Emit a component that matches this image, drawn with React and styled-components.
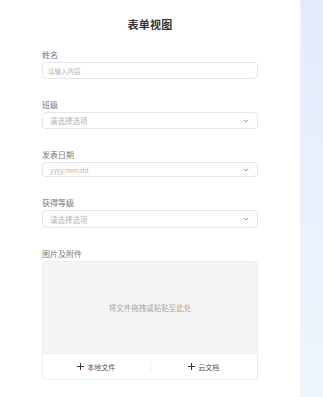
import React from 'react'
import styled, { createGlobalStyle } from 'styled-components'

const Global = createGlobalStyle`
  html, body { margin: 0; padding: 0; }
  body { font-family: "Noto Sans CJK SC", "Noto Sans", sans-serif; }
`

const Page = styled.div`
  display: flex;
  width: 323px;
  height: 397px;
  overflow: hidden;
`

const Panel = styled.div`
  width: 300px;
  background: #fff;
  padding: 17px 42px 0 42px;
  box-sizing: border-box;
  display: flex;
  flex-direction: column;
`

const Side = styled.div`
  flex: 1;
  background: linear-gradient(180deg, #e2ebfb 0%, #e9f1fd 50%, #eef5fd 100%);
  border-left: 1px solid #eef0f4;
`

const Title = styled.h1`
  margin: 0 0 18px;
  font-size: 11px;
  line-height: 15px;
  font-weight: 700;
  color: #333;
  text-align: center;
  letter-spacing: 0.3px;
`

const Field = styled.div`
  display: flex;
  flex-direction: column;
  margin-bottom: 21px;
`

const Label = styled.div`
  font-size: 8px;
  line-height: 10px;
  color: #777;
  margin-bottom: 2px;
`

const Box = styled.div`
  height: ${p => p.h}px;
  border: 1px solid #e6e6e6;
  border-radius: 4px;
  box-sizing: border-box;
  display: flex;
  align-items: center;
  justify-content: space-between;
  padding: 0 ${p => p.select ? 8 : 5}px 0 ${p => p.select ? 7 : 5}px;
  font-size: ${p => p.small ? 6.5 : 7.5}px;
  color: #b4b4b4;
`

const Upload = styled.div`
  border: 1px solid #ececec;
  border-radius: 4px;
  overflow: hidden;
  display: flex;
  flex-direction: column;
`

const Drop = styled.div`
  height: 91px;
  background: #f5f5f5;
  display: flex;
  align-items: center;
  justify-content: center;
  font-size: 7.5px;
  color: #a8a8a8;
`

const Footer = styled.div`
  height: 25px;
  display: flex;
  align-items: center;
  border-top: 1px solid #eee;
`

const Action = styled.div`
  flex: 1;
  display: flex;
  align-items: center;
  justify-content: center;
  gap: 3px;
  font-size: 7px;
  color: #555;
  & + & { border-left: 1px solid #f0f0f0; }
  height: 12px;
`

const Chevron = () => (
  <svg width="6" height="4" viewBox="0 0 6 4">
    <path d="M0.8 0.8 L3 3 L5.2 0.8" fill="none" stroke="#888" strokeWidth="0.9" />
  </svg>
)

const Plus = () => (
  <svg width="7" height="7" viewBox="0 0 7 7">
    <path d="M3.5 0 V7 M0 3.5 H7" stroke="#333" strokeWidth="1" />
  </svg>
)

export default function App() {
  return (
    <Page>
      <Global />
      <Panel>
        <Title>表单视图</Title>
        <Field>
          <Label>姓名</Label>
          <Box h={17} small>请输入内容</Box>
        </Field>
        <Field>
          <Label>班级</Label>
          <Box h={17} select>请选择选项<Chevron /></Box>
        </Field>
        <Field>
          <Label>发表日期</Label>
          <Box h={15} small select>yyyy/mm/dd<Chevron /></Box>
        </Field>
        <Field>
          <Label>获得等级</Label>
          <Box h={18} select>请选择选项<Chevron /></Box>
        </Field>
        <Field>
          <Label>图片及附件</Label>
          <Upload>
            <Drop>将文件拖拽或粘贴至此处</Drop>
            <Footer>
              <Action><Plus />本地文件</Action>
              <Action><Plus />云文档</Action>
            </Footer>
          </Upload>
        </Field>
      </Panel>
      <Side />
    </Page>
  )
}
